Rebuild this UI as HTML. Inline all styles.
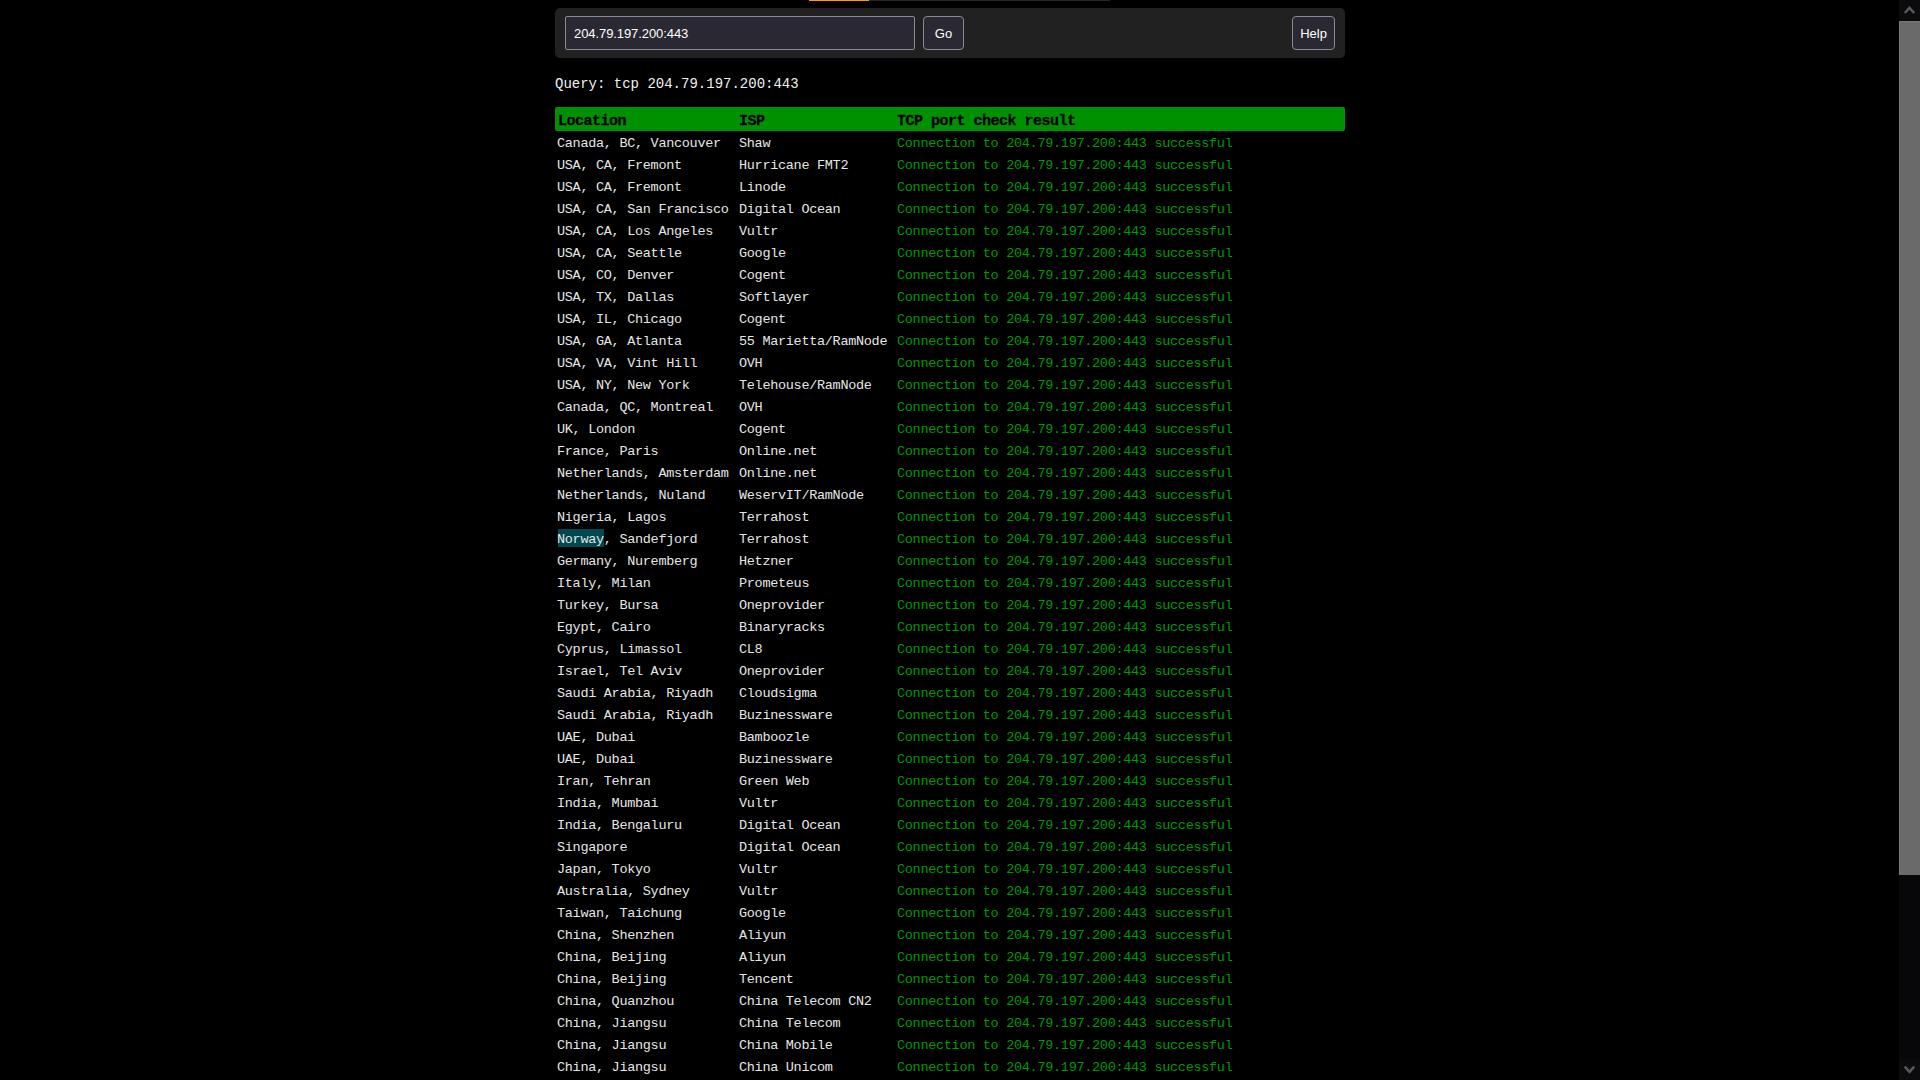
<!DOCTYPE html>
<html><head><meta charset="utf-8">
<style>
html,body{margin:0;padding:0;background:#000;width:1920px;height:1080px;overflow:hidden;}
body{position:relative;font-family:"Liberation Mono",monospace;color:#e6e6e6;}
.a{position:absolute;}
#tabo{left:809px;top:0;width:60px;height:1px;background:#ff9a00;}
#tabg{left:869px;top:0;width:241px;height:1px;background:#262626;}
#panel{left:555px;top:8px;width:790px;height:50px;background:#212121;border-radius:5px;}
.box{position:absolute;top:16px;height:32px;border:1px solid #8c8996;background:#2a2832;color:#fff;font-family:"Liberation Sans",sans-serif;font-size:13px;line-height:34px;box-sizing:content-box;}
#inp{left:565px;width:348px;border-radius:2px;}
#inp span{position:absolute;left:8px;top:0;letter-spacing:-0.08px;}
#go{left:923px;width:39px;border-radius:4px;text-align:center;}
#help{left:1292px;width:41px;border-radius:4px;text-align:center;}
#query{left:555px;top:73px;font-size:14px;line-height:22px;color:#f0f0f0;white-space:pre;}
#hdr{left:555px;top:107px;width:790px;height:24px;background:#009100;border-radius:2px;}
#hdr span{position:absolute;top:3px;line-height:24px;font-weight:bold;color:#000;font-size:15px;letter-spacing:-0.5px;white-space:pre;-webkit-text-stroke:0.3px #000;}
.r{position:absolute;left:0;height:22px;line-height:22px;font-size:13.5px;letter-spacing:-0.3px;white-space:pre;width:1920px;}
.c1{position:absolute;left:557px;}
.c2{position:absolute;left:739px;}
.c3{position:absolute;left:897px;color:#009900;}
.hl{background:#004852;}
#sb{left:1899px;top:0;width:21px;height:1080px;background:#070709;}
#sbup{left:1899px;top:0;width:21px;height:20px;background:#0b0b0d;}
#sbdn{left:1899px;top:1059px;width:21px;height:21px;background:#0b0b0d;}
#thumb{left:1899px;top:21px;width:21px;height:854px;background:#6a6a6a;box-shadow:inset 1px 1px 0 #787878;}
#hl{left:558px;top:529px;width:46px;height:18px;background:#004852;}

</style></head><body>
<div class="a" id="tabo"></div><div class="a" id="tabg"></div>
<div class="a" id="panel"></div><div class="a" id="hl"></div>
<div class="box" id="inp"><span>204.79.197.200:443</span></div>
<div class="box" id="go">Go</div>
<div class="box" id="help">Help</div>
<div class="a" id="query">Query: tcp 204.79.197.200:443</div>
<div class="a" id="hdr"><span style="left:3px">Location</span><span style="left:184px">ISP</span><span style="left:342px">TCP port check result</span></div>
<div class="r" style="top:133px"><span class="c1">Canada, BC, Vancouver</span><span class="c2">Shaw</span><span class="c3">Connection to 204.79.197.200:443 successful</span></div>
<div class="r" style="top:155px"><span class="c1">USA, CA, Fremont</span><span class="c2">Hurricane FMT2</span><span class="c3">Connection to 204.79.197.200:443 successful</span></div>
<div class="r" style="top:177px"><span class="c1">USA, CA, Fremont</span><span class="c2">Linode</span><span class="c3">Connection to 204.79.197.200:443 successful</span></div>
<div class="r" style="top:199px"><span class="c1">USA, CA, San Francisco</span><span class="c2">Digital Ocean</span><span class="c3">Connection to 204.79.197.200:443 successful</span></div>
<div class="r" style="top:221px"><span class="c1">USA, CA, Los Angeles</span><span class="c2">Vultr</span><span class="c3">Connection to 204.79.197.200:443 successful</span></div>
<div class="r" style="top:243px"><span class="c1">USA, CA, Seattle</span><span class="c2">Google</span><span class="c3">Connection to 204.79.197.200:443 successful</span></div>
<div class="r" style="top:265px"><span class="c1">USA, CO, Denver</span><span class="c2">Cogent</span><span class="c3">Connection to 204.79.197.200:443 successful</span></div>
<div class="r" style="top:287px"><span class="c1">USA, TX, Dallas</span><span class="c2">Softlayer</span><span class="c3">Connection to 204.79.197.200:443 successful</span></div>
<div class="r" style="top:309px"><span class="c1">USA, IL, Chicago</span><span class="c2">Cogent</span><span class="c3">Connection to 204.79.197.200:443 successful</span></div>
<div class="r" style="top:331px"><span class="c1">USA, GA, Atlanta</span><span class="c2">55 Marietta/RamNode</span><span class="c3">Connection to 204.79.197.200:443 successful</span></div>
<div class="r" style="top:353px"><span class="c1">USA, VA, Vint Hill</span><span class="c2">OVH</span><span class="c3">Connection to 204.79.197.200:443 successful</span></div>
<div class="r" style="top:375px"><span class="c1">USA, NY, New York</span><span class="c2">Telehouse/RamNode</span><span class="c3">Connection to 204.79.197.200:443 successful</span></div>
<div class="r" style="top:397px"><span class="c1">Canada, QC, Montreal</span><span class="c2">OVH</span><span class="c3">Connection to 204.79.197.200:443 successful</span></div>
<div class="r" style="top:419px"><span class="c1">UK, London</span><span class="c2">Cogent</span><span class="c3">Connection to 204.79.197.200:443 successful</span></div>
<div class="r" style="top:441px"><span class="c1">France, Paris</span><span class="c2">Online.net</span><span class="c3">Connection to 204.79.197.200:443 successful</span></div>
<div class="r" style="top:463px"><span class="c1">Netherlands, Amsterdam</span><span class="c2">Online.net</span><span class="c3">Connection to 204.79.197.200:443 successful</span></div>
<div class="r" style="top:485px"><span class="c1">Netherlands, Nuland</span><span class="c2">WeservIT/RamNode</span><span class="c3">Connection to 204.79.197.200:443 successful</span></div>
<div class="r" style="top:507px"><span class="c1">Nigeria, Lagos</span><span class="c2">Terrahost</span><span class="c3">Connection to 204.79.197.200:443 successful</span></div>
<div class="r" style="top:529px"><span class="c1">Norway, Sandefjord</span><span class="c2">Terrahost</span><span class="c3">Connection to 204.79.197.200:443 successful</span></div>
<div class="r" style="top:551px"><span class="c1">Germany, Nuremberg</span><span class="c2">Hetzner</span><span class="c3">Connection to 204.79.197.200:443 successful</span></div>
<div class="r" style="top:573px"><span class="c1">Italy, Milan</span><span class="c2">Prometeus</span><span class="c3">Connection to 204.79.197.200:443 successful</span></div>
<div class="r" style="top:595px"><span class="c1">Turkey, Bursa</span><span class="c2">Oneprovider</span><span class="c3">Connection to 204.79.197.200:443 successful</span></div>
<div class="r" style="top:617px"><span class="c1">Egypt, Cairo</span><span class="c2">Binaryracks</span><span class="c3">Connection to 204.79.197.200:443 successful</span></div>
<div class="r" style="top:639px"><span class="c1">Cyprus, Limassol</span><span class="c2">CL8</span><span class="c3">Connection to 204.79.197.200:443 successful</span></div>
<div class="r" style="top:661px"><span class="c1">Israel, Tel Aviv</span><span class="c2">Oneprovider</span><span class="c3">Connection to 204.79.197.200:443 successful</span></div>
<div class="r" style="top:683px"><span class="c1">Saudi Arabia, Riyadh</span><span class="c2">Cloudsigma</span><span class="c3">Connection to 204.79.197.200:443 successful</span></div>
<div class="r" style="top:705px"><span class="c1">Saudi Arabia, Riyadh</span><span class="c2">Buzinessware</span><span class="c3">Connection to 204.79.197.200:443 successful</span></div>
<div class="r" style="top:727px"><span class="c1">UAE, Dubai</span><span class="c2">Bamboozle</span><span class="c3">Connection to 204.79.197.200:443 successful</span></div>
<div class="r" style="top:749px"><span class="c1">UAE, Dubai</span><span class="c2">Buzinessware</span><span class="c3">Connection to 204.79.197.200:443 successful</span></div>
<div class="r" style="top:771px"><span class="c1">Iran, Tehran</span><span class="c2">Green Web</span><span class="c3">Connection to 204.79.197.200:443 successful</span></div>
<div class="r" style="top:793px"><span class="c1">India, Mumbai</span><span class="c2">Vultr</span><span class="c3">Connection to 204.79.197.200:443 successful</span></div>
<div class="r" style="top:815px"><span class="c1">India, Bengaluru</span><span class="c2">Digital Ocean</span><span class="c3">Connection to 204.79.197.200:443 successful</span></div>
<div class="r" style="top:837px"><span class="c1">Singapore</span><span class="c2">Digital Ocean</span><span class="c3">Connection to 204.79.197.200:443 successful</span></div>
<div class="r" style="top:859px"><span class="c1">Japan, Tokyo</span><span class="c2">Vultr</span><span class="c3">Connection to 204.79.197.200:443 successful</span></div>
<div class="r" style="top:881px"><span class="c1">Australia, Sydney</span><span class="c2">Vultr</span><span class="c3">Connection to 204.79.197.200:443 successful</span></div>
<div class="r" style="top:903px"><span class="c1">Taiwan, Taichung</span><span class="c2">Google</span><span class="c3">Connection to 204.79.197.200:443 successful</span></div>
<div class="r" style="top:925px"><span class="c1">China, Shenzhen</span><span class="c2">Aliyun</span><span class="c3">Connection to 204.79.197.200:443 successful</span></div>
<div class="r" style="top:947px"><span class="c1">China, Beijing</span><span class="c2">Aliyun</span><span class="c3">Connection to 204.79.197.200:443 successful</span></div>
<div class="r" style="top:969px"><span class="c1">China, Beijing</span><span class="c2">Tencent</span><span class="c3">Connection to 204.79.197.200:443 successful</span></div>
<div class="r" style="top:991px"><span class="c1">China, Quanzhou</span><span class="c2">China Telecom CN2</span><span class="c3">Connection to 204.79.197.200:443 successful</span></div>
<div class="r" style="top:1013px"><span class="c1">China, Jiangsu</span><span class="c2">China Telecom</span><span class="c3">Connection to 204.79.197.200:443 successful</span></div>
<div class="r" style="top:1035px"><span class="c1">China, Jiangsu</span><span class="c2">China Mobile</span><span class="c3">Connection to 204.79.197.200:443 successful</span></div>
<div class="r" style="top:1057px"><span class="c1">China, Jiangsu</span><span class="c2">China Unicom</span><span class="c3">Connection to 204.79.197.200:443 successful</span></div>
<div class="a" id="sb"></div><div class="a" id="sbup"></div><div class="a" id="sbdn"></div><div class="a" id="thumb"></div>
<svg class="a" style="left:1899px;top:0" width="21" height="1080" viewBox="0 0 21 1080"><path d="M5.8 13.0 L10.5 7.8 L15.2 13.0" fill="none" stroke="#5a5a5a" stroke-width="2.5" stroke-linecap="butt" stroke-linejoin="miter"/><path d="M5.8 1066.6 L10.5 1071.8 L15.2 1066.6" fill="none" stroke="#5a5a5a" stroke-width="2.5" stroke-linecap="butt" stroke-linejoin="miter"/></svg>
</body></html>
